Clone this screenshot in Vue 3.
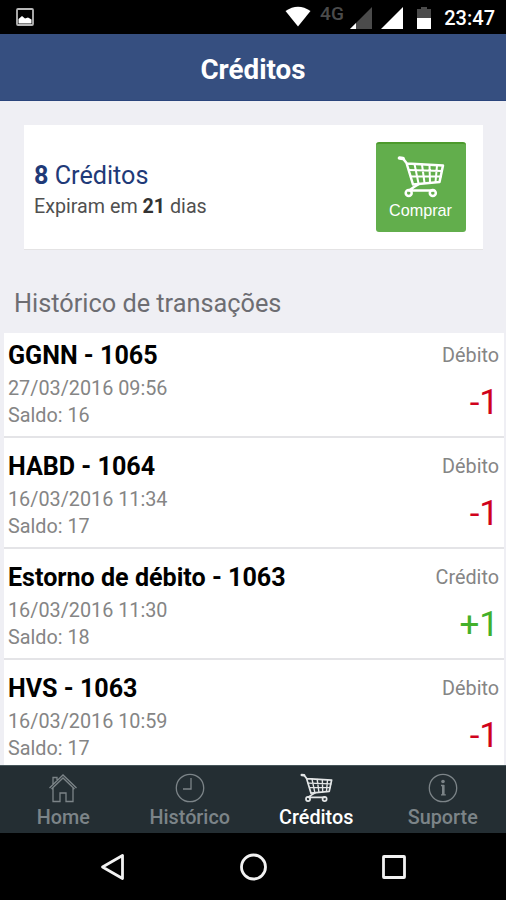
<script setup>
import {computed, ref} from "vue";

const credits = ref(8);
const daysLeft = ref(21);
const activeTab = ref("creditos");

const transactions = ref([
  {title: "GGNN - 1065", date: "27/03/2016 09:56", balance: 16, amount: -1},
  {title: "HABD - 1064", date: "16/03/2016 11:34", balance: 17, amount: -1},
  {title: "Estorno de débito - 1063", date: "16/03/2016 11:30", balance: 18, amount: 1},
  {title: "HVS - 1063", date: "16/03/2016 10:59", balance: 17, amount: -1}
]);

const tabs = [
  {id: "home", label: "Home"},
  {id: "historico", label: "Histórico"},
  {id: "creditos", label: "Créditos"},
  {id: "suporte", label: "Suporte"}
];

const rows = computed(() =>
    transactions.value.map(t => ({
      ...t,
      type: t.amount < 0 ? "Débito" : "Crédito",
      sign: t.amount < 0 ? String(t.amount) : "+" + t.amount
    }))
);

function selectTab(id) {
  activeTab.value = id;
}
</script>

<template>
  <div class="screen">
    <div class="status-bar">
      <svg class="status-picture" width="18" height="18" viewBox="0 0 18 18">
        <rect x="1" y="1" width="16" height="16" rx="1" fill="none" stroke="#b8b8b8" stroke-width="1.8"/>
        <path d="M2.500 15.500V11L6 8L9 10.500L12 9.500L15.500 11.500V15.500Z" fill="#fff"/>
      </svg>
      <div class="status-right">
        <svg class="wifi" width="26" height="21" viewBox="0 0 26 21">
          <path d="M0.500 5Q13 -3.500 25.500 5L13 20.500Z" fill="#fff"/>
        </svg>
        <span class="network">4G</span>
        <svg class="signal-weak" width="22" height="22" viewBox="0 0 22 22">
          <path d="M22 0V22H0Z" fill="#4b4b4b"/>
          <path d="M6 16V22H0Z" fill="#fff"/>
        </svg>
        <svg class="signal" width="22" height="22" viewBox="0 0 22 22">
          <path d="M22 0V22H0Z" fill="#fff"/>
        </svg>
        <svg class="battery" width="14" height="22" viewBox="0 0 14 22">
          <path d="M0 2H4V0H10V2H14V11H0Z" fill="#4b4b4b"/>
          <path d="M0 11H14V22H0Z" fill="#fff"/>
        </svg>
        <span class="clock">23:47</span>
      </div>
    </div>

    <header class="header">Créditos</header>

    <main class="content">
      <section class="card">
        <div>
          <div class="credits"><b>{{ credits }}</b> Créditos</div>
          <div class="expires">Expiram em <b>{{ daysLeft }}</b> dias</div>
        </div>
        <button class="buy">
          <svg width="48" height="42" viewBox="0 0 48 42" class="cart">
            <path class="cart-handle" d="M2.500 2L6 2.500"/>
            <path class="cart-frame" d="M6 2.500L9.500 7L16 28.500L42.500 26L46 9.500L10 7.500"/>
            <path class="cart-grid" d="M12 14L45 15M14 20.500L44 20.500M17.500 8L21.500 27.500M25 8.500L27.500 27M32.500 9L33 26.500M40 9.500L38.500 26"/>
            <path class="cart-frame" d="M22 28L17 31L12 34.500H36"/>
            <circle class="cart-frame" cx="11.700" cy="37" r="3"/>
            <circle class="cart-frame" cx="35.800" cy="37" r="3"/>
          </svg>
          <span>Comprar</span>
        </button>
      </section>

      <h2 class="section-title">Histórico de transações</h2>

      <ul class="list">
        <li v-for="row in rows" :key="row.date" class="row">
          <div>
            <div class="row-title">{{ row.title }}</div>
            <div class="row-line">{{ row.date }}</div>
            <div class="row-line">Saldo: {{ row.balance }}</div>
          </div>
          <div class="row-side">
            <div class="row-type">{{ row.type }}</div>
            <div class="amount" :class="{positive: row.amount > 0}">{{ row.sign }}</div>
          </div>
        </li>
      </ul>
    </main>

    <nav class="tabs">
      <div v-for="tab in tabs"
           :key="tab.id"
           class="tab"
           :class="{active: activeTab === tab.id}"
           @click="selectTab(tab.id)">
        <svg v-if="tab.id === 'home'" class="line-icon" width="30" height="30" viewBox="0 0 30 30">
          <path d="M1.500 15L15 2L28.500 15M3.500 16L15 5L26.500 16M5 11V4.500H9V8M5 15V28.500H12V20H18V28.500H25V15"/>
        </svg>
        <svg v-else-if="tab.id === 'historico'" class="line-icon" width="30" height="30" viewBox="0 0 30 30">
          <circle cx="15" cy="15" r="13.700"/>
          <path d="M16 5V16H8"/>
        </svg>
        <svg v-else-if="tab.id === 'creditos'" class="cart cart-small" width="33" height="30" viewBox="0 0 48 42">
          <path class="cart-handle" d="M2.500 2L6 2.500"/>
          <path class="cart-frame" d="M6 2.500L9.500 7L16 28.500L42.500 26L46 9.500L10 7.500"/>
          <path class="cart-grid" d="M12 14L45 15M14 20.500L44 20.500M17.500 8L21.500 27.500M25 8.500L27.500 27M32.500 9L33 26.500M40 9.500L38.500 26"/>
          <path class="cart-frame" d="M22 28L17 31L12 34.500H36"/>
          <circle class="cart-frame" cx="11.700" cy="37" r="3"/>
          <circle class="cart-frame" cx="35.800" cy="37" r="3"/>
        </svg>
        <svg v-else class="line-icon" width="30" height="30" viewBox="0 0 30 30">
          <circle cx="15" cy="15" r="13.700"/>
          <path class="info-mark" d="M15.300 12V22"/>
          <path d="M13 12.500H16M13 21.800H17.800"/>
          <circle class="info-dot" cx="15" cy="8.500" r="1.800"/>
        </svg>
        <span>{{ tab.label }}</span>
      </div>
    </nav>

    <div class="system-nav">
      <svg width="28" height="30" viewBox="0 0 28 30">
        <path d="M4.500 15L24.500 3.500V26.500Z"/>
      </svg>
      <svg width="28" height="30" viewBox="0 0 28 30">
        <circle cx="14.500" cy="15" r="12"/>
      </svg>
      <svg width="28" height="30" viewBox="0 0 28 30">
        <rect x="3.500" y="4.500" width="21" height="21" rx="0.500"/>
      </svg>
    </div>
  </div>
</template>

<style>
body {
  margin: 0;
  background: #000;
}
</style>

<style scoped>
.screen {
  width: 506px;
  height: 900px;
  display: flex;
  flex-direction: column;
  overflow: hidden;
  font-family: Roboto, "Liberation Sans", sans-serif;
  background: #efeff4;
}

.status-bar {
  flex: none;
  height: 34px;
  box-sizing: border-box;
  padding: 0 11px 0 16px;
  display: flex;
  justify-content: space-between;
  background: #000;
}

.status-picture {
  margin-top: 8px;
}

.status-right {
  display: flex;
  align-items: flex-start;
}

.wifi {
  margin-top: 6px;
}

.network {
  margin: 4px 6px 0 9px;
  font-size: 19px;
  line-height: 20px;
  font-weight: 500;
  letter-spacing: 0.3px;
  color: #4b4b4b;
}

.signal-weak,
.signal,
.battery {
  margin-top: 7px;
}

.signal {
  margin-left: 9px;
}

.battery {
  margin-left: 14px;
}

.clock {
  margin: 6px 0 0 13px;
  font-size: 20px;
  line-height: 25px;
  font-weight: 500;
  color: #fff;
}

.header {
  flex: none;
  height: 67px;
  box-sizing: border-box;
  border-bottom: 1px solid #2b457c;
  background: #364f80;
  color: #fff;
  font-size: 27.8px;
  line-height: 71px;
  font-weight: 700;
  text-align: center;
}

.content {
  flex: 1;
  min-height: 0;
  overflow: hidden;
}

.card {
  margin: 24px 23px 0 24px;
  height: 125px;
  box-sizing: border-box;
  padding: 0 17px 0 10px;
  border-bottom: 1px solid #e4e3e4;
  display: flex;
  align-items: center;
  justify-content: space-between;
  background: #fff;
}

.credits {
  margin-top: 6px;
  font-size: 25.2px;
  line-height: 32px;
  color: #1f3a78;
}

.expires {
  font-size: 19.7px;
  line-height: 29px;
  color: #505050;
}

.expires b {
  color: #333;
}

.buy {
  width: 90px;
  height: 90px;
  padding: 12px 1px 0 0;
  border: 0;
  border-top: 2px solid #4c9a2c;
  border-radius: 3px;
  display: flex;
  flex-direction: column;
  align-items: center;
  background: #62ae4c;
  color: #fff;
  font-family: "Liberation Sans", Arial, sans-serif;
  font-size: 16.2px;
  line-height: 25px;
}

.cart {
  fill: none;
  stroke: #fff;
  stroke-linecap: round;
  stroke-linejoin: round;
}

.cart-small {
  stroke: #e3e6e7;
}

.cart-handle {
  stroke-width: 3.6;
}

.cart-frame {
  stroke-width: 2.5;
}

.cart-grid {
  stroke-width: 2;
}

.section-title {
  margin: 37px 0 0 14px;
  font-size: 25.3px;
  line-height: 34px;
  font-weight: 400;
  color: #6d6d72;
}

.list {
  margin: 12px 2px 0 4px;
  padding: 0;
  list-style: none;
}

.row {
  height: 111px;
  box-sizing: border-box;
  padding: 12px 5px 0 4px;
  border-bottom: 2px solid #e4e4e7;
  display: flex;
  justify-content: space-between;
  background: #fff;
}

.row:first-child {
  height: 105px;
  padding-top: 6px;
}

.row-title {
  margin-bottom: 3px;
  font-size: 25.1px;
  line-height: 33px;
  font-weight: 700;
  color: #000;
}

.row-line {
  font-size: 19.8px;
  line-height: 27px;
  color: #858585;
}

.row-side {
  text-align: right;
}

.row-type {
  font-size: 19.8px;
  line-height: 34px;
  color: #858585;
}

.amount {
  margin-top: 8px;
  font-size: 35px;
  line-height: 43px;
  color: #d0021b;
}

.amount.positive {
  color: #43b02a;
}

.tabs {
  flex: none;
  height: 68px;
  box-sizing: border-box;
  padding-top: 7px;
  border-top: 1px solid #46565a;
  display: grid;
  grid-template-columns: repeat(4, 1fr);
  background: #242e33;
}

.tab {
  display: flex;
  flex-direction: column;
  align-items: center;
  font-size: 19.8px;
  line-height: 29px;
  font-weight: 500;
  color: #7c8488;
  cursor: pointer;
}

.tab.active {
  color: #fff;
}

.line-icon {
  fill: none;
  stroke: #7c8488;
  stroke-width: 1.3;
}

.info-mark {
  stroke-width: 2.6;
}

.info-dot {
  fill: #7c8488;
  stroke: none;
}

.system-nav {
  flex: none;
  height: 67px;
  display: flex;
  align-items: center;
  justify-content: center;
  gap: 113px;
  background: #000;
}

.system-nav svg {
  fill: none;
  stroke: #f2f2f2;
  stroke-width: 2.8;
  stroke-linejoin: round;
}
</style>
